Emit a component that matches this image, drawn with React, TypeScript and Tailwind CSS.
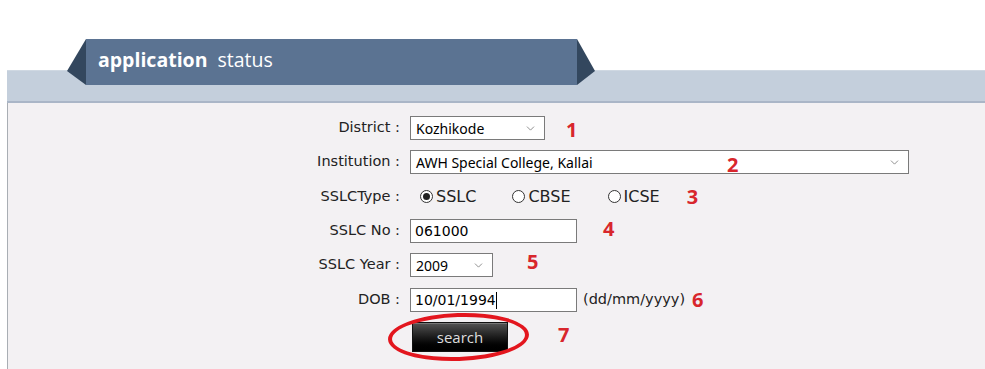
import { ChevronDown } from 'lucide-react'

const label = "font-['DejaVu_Sans',sans-serif] text-[14.5px] text-[#222]"
const field = "font-['DejaVu_Sans',sans-serif] text-[14px] text-black"
const ui = "font-['Noto_Sans',sans-serif] text-[14px] text-black"
const mark = "font-['Noto_Sans',sans-serif] font-bold text-[20px] leading-none text-[#d8262c]"

function Select({ value, width }: { value: string; width: string }) {
  return (
    <div className={`relative flex items-center h-[24px] bg-white border border-[#7a7a7a] pl-[5px] ${width}`}>
      <span className={ui}>{value}</span>
      <ChevronDown size={13} strokeWidth={1.5} className="absolute right-[7px] top-[5px] text-[#777]" />
    </div>
  )
}

function Radio({ text, checked }: { text: string; checked?: boolean }) {
  return (
    <div className="flex items-center">
      <span className="flex items-center justify-center w-[13px] h-[13px] rounded-full border border-[#333] bg-white">
        {checked && <span className="w-[7px] h-[7px] rounded-full bg-[#222]" />}
      </span>
      <span className={`${label} text-[16px] ml-[3px]`}>{text}</span>
    </div>
  )
}

function Row({ name, children, h }: { name?: string; children: React.ReactNode; h: string }) {
  return (
    <div className={`flex items-center ${h}`}>
      <div className={`w-[392px] text-right ${label}`}>{name}</div>
      <div className="flex items-center ml-[10px]">{children}</div>
    </div>
  )
}

export default function App() {
  return (
    <div className="w-[985px] h-[369px] bg-white overflow-hidden">
      <div className="h-[39px]" />
      <div className="relative pl-[7px]">
        {/* tab */}
        <div className="absolute left-[67px] top-0 flex h-[46px] z-10">
          <svg width="19" height="46" viewBox="0 0 19 46">
            <polygon points="19,0 0,32 19,46" fill="#33475e" />
          </svg>
          <div className="w-[491px] bg-[#5b7392] pl-[12px] pt-[8px]">
            <span className="font-['Open_Sans',sans-serif] text-[19.5px] leading-[26px] text-white">
              <b className="font-bold">application</b>
              <span className="ml-[10px]">status</span>
            </span>
          </div>
          <svg width="19" height="46" viewBox="0 0 19 46">
            <polygon points="0,0 18,32 0,46" fill="#33475e" />
          </svg>
        </div>

        <div className="h-[31px]" />
        <div className="h-[33px] bg-[#c4cfdc] border-t border-[#cfd8e2] border-b-2 border-b-[#aab6c7]" />

        {/* form */}
        <div className="border-l border-[#a9aeb4] bg-[#f3f1f3] h-[266px] pt-[8px]">
          <Row name="District :" h="h-[34px]">
            <Select value="Kozhikode" width="w-[135px]" />
            <span className={`${mark} ml-[21px] mt-[4px]`}>1</span>
          </Row>
          <Row name="Institution :" h="h-[34px]">
            <div className="relative">
              <Select value="AWH Special College, Kallai" width="w-[499px]" />
              <span className={`${mark} absolute left-[317px] top-[5px]`}>2</span>
            </div>
          </Row>
          <Row name="SSLCType :" h="h-[35px]">
            <div className="flex items-center pl-[10px]">
              <Radio text="SSLC" checked />
              <div className="ml-[36px]"><Radio text="CBSE" /></div>
              <div className="ml-[37px]"><Radio text="ICSE" /></div>
              <span className={`${mark} ml-[27px]`}>3</span>
            </div>
          </Row>
          <Row name="SSLC No :" h="h-[34px]">
            <div className="flex items-center w-[167px] h-[24px] bg-white border border-[#7a7a7a] pl-[4px]">
              <span className={field}>061000</span>
            </div>
            <span className={`${mark} ml-[26px] -mt-[4px]`}>4</span>
          </Row>
          <Row name="SSLC Year :" h="h-[34px]">
            <Select value="2009" width="w-[83px]" />
            <span className={`${mark} ml-[34px] -mt-[6px]`}>5</span>
          </Row>
          <Row name="DOB :" h="h-[36px]">
            <div className="flex items-center w-[167px] h-[24px] bg-white border border-[#7a7a7a] pl-[4px]">
              <span className={field}>10/01/1994</span>
              <span className="w-px h-[17px] bg-black" />
            </div>
            <span className={`${label} ml-[6px]`}>(dd/mm/yyyy)</span>
            <span className={`${mark} ml-[7px]`}>6</span>
          </Row>
          <div className="flex items-center h-[38px] pl-[404px]">
            <div className="relative">
              <button className="w-[96px] h-[30px] border border-[#111] bg-gradient-to-b from-[#555] via-[#1c1c1c] to-[#000] shadow-[inset_0_1px_0_#777]">
                <span className="font-['Open_Sans',sans-serif] text-[15px] text-[#ddd]">search</span>
              </button>
              <div className="absolute left-[-24px] top-[-9px] w-[141px] h-[48px] rounded-[50%] border-[4px] border-[#e3161e] -rotate-2" />
            </div>
            <span className={`${mark} ml-[50px] -mt-[4px]`}>7</span>
          </div>
        </div>
      </div>
    </div>
  )
}
